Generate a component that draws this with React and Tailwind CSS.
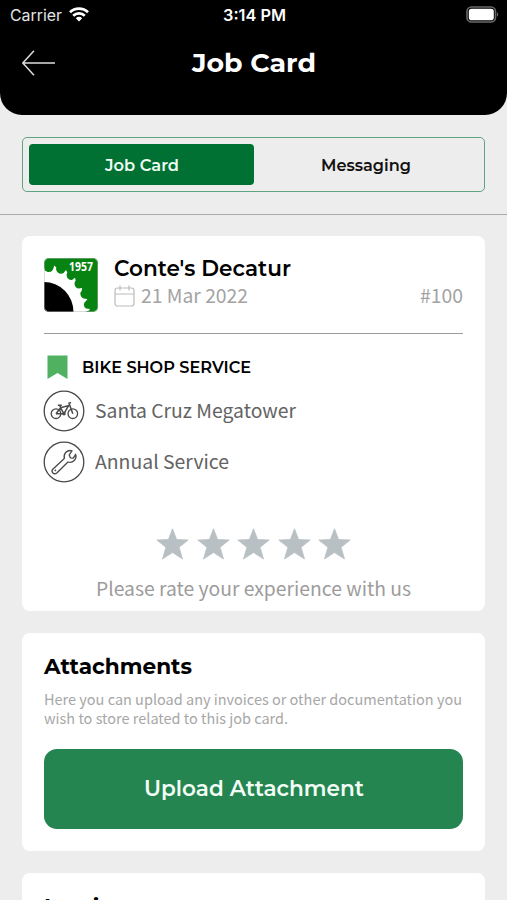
const mont = "font-['Montserrat','Inter',sans-serif]";
const src = "font-['Noto_Sans_CJK_SC',sans-serif]";

// Single line of text sized to an exact advance width.
function Line({ children, w, className }) {
  return (
    <svg width={w} height="32" className={"block shrink-0 overflow-visible " + className}>
      <text x="0" y="24" textLength={w} lengthAdjust="spacingAndGlyphs" fill="currentColor">
        {children}
      </text>
    </svg>
  );
}

function Star() {
  return (
    <svg width="33" height="32" viewBox="0 0 33 32" fill="#b9c0c4" stroke="#b9c0c4" strokeWidth=".8" strokeLinejoin="round">
      <path d="M16.5 0.8 20.6 11.5 32.2 12 23.1 19.3 26.5 31 16.5 24.5 6.5 31 9.9 19.3 0.8 12 12.4 11.5Z" />
    </svg>
  );
}

function Logo() {
  return (
    <svg width="54" height="54" viewBox="0 0 54 54" className="shrink-0 rounded-[5px]">
      <rect width="54" height="54" fill="#078311" />
      <path d="M0 54V9.5A4.8 4.8 0 0 0 9 11.5L10.3 7.5 12.3 9.5A4.9 4.9 0 0 0 19.5 15L22 12 23.3 14.5A4.9 4.9 0 0 0 28 22L31 19.8 31.7 22.5A4.9 4.9 0 0 0 34.5 30.5L38 30 37.8 32.5A4.9 4.9 0 0 0 39.5 40.5L43.5 41 42 43A4.4 4.4 0 0 0 42 50.5L46 51 45 52.5 41 54Z" fill="#fff" />
      <path d="M0 24A29.5 30 0 0 1 29.5 54H0Z" fill="#000" />
      <text x="25" y="13" textLength="24" lengthAdjust="spacingAndGlyphs" fill="#fff" className="font-['Noto_Sans',sans-serif] text-[12.5px] font-bold">1957</text>
      <rect x=".3" y=".3" width="53.4" height="53.4" rx="5" fill="none" stroke="#b5b5b5" strokeWidth=".6" />
    </svg>
  );
}

export default function App() {
  return (
    <div className="h-[900px] w-[507px] overflow-hidden bg-[#ededed]">
      <header className="h-[115px] rounded-b-[22px] bg-black text-white">
        <div className="grid h-[30px] grid-cols-3 items-center pl-[10px] pr-[8px] font-['Inter',sans-serif] text-base">
          <div className="flex items-center gap-[7px]">
            <Line w={52} className="-mt-[4px] text-[16px] text-[#e4e4e4]">Carrier</Line>
            <svg width="20" height="15" viewBox="0 0 20 15" fill="none" stroke="#fff" strokeWidth="2.8" className="-mt-[2px]">
              <path d="M1 5.2C6 .5 14 .5 19 5.2M4.2 8.7C7.5 5.6 12.5 5.6 15.8 8.7" />
              <path d="M6.8 11.2Q10 8.5 13.2 11.2L10 14.5Z" fill="#fff" stroke="none" />
            </svg>
          </div>
          <div className="flex justify-center">
            <Line w={63} className="-mt-[4px] text-[16px] font-semibold">3:14 PM</Line>
          </div>
          <svg width="33" height="17" viewBox="0 0 33 17" className="-mt-[2px] justify-self-end">
            <rect x="1" y="1" width="28.5" height="15" rx="4.5" fill="none" stroke="#686868" strokeWidth="1.6" />
            <rect x="2.8" y="2.8" width="25" height="11.4" rx="2.8" fill="#fff" />
            <path d="M31 6.3Q33 8.5 31 10.7Z" fill="#888" />
          </svg>
        </div>
        <div className="grid grid-cols-[125px_1fr_125px] items-center px-[22px] pt-[17.5px]">
          <svg width="34" height="26" viewBox="0 0 34 26" fill="none" stroke="#ddd" strokeWidth="1.5" className="-mt-[1px]">
            <path d="M12 .8.8 13 12 25.2M.8 13H33" />
          </svg>
          <div className="flex justify-center">
            <Line w={124} className={mont + " text-[25px] font-bold"}>Job Card</Line>
          </div>
        </div>
      </header>

      <div className="border-b border-[#aaa] px-[22px] py-[22px]">
        <div className="grid h-[55px] grid-cols-[225px_1fr] rounded-[5px] border-[1.5px] border-[#5fa381] p-[6px]">
          <div className="flex items-center justify-center rounded-[4px] bg-[#007133] text-[#effcf3]">
            <Line w={74} className={mont + " -mt-[4px] text-[16.5px] font-semibold"}>Job Card</Line>
          </div>
          <div className="flex items-center justify-center text-[#111]">
            <Line w={90} className={mont + " -mt-[4px] text-[16.5px] font-semibold"}>Messaging</Line>
          </div>
        </div>
      </div>

      <main className="flex flex-col gap-[22px] px-[22px] pt-[21px]">
        <section className="h-[375px] rounded-[8px] bg-white px-[22px] pt-[22px]">
          <div className="flex h-[76px] gap-[16px] border-b border-[#9b9b9b]">
            <Logo />
            <div className="flex-1">
              <Line w={177} className={mont + " -mt-[6px] text-[21.5px] font-semibold text-black"}>Conte's Decatur</Line>
              <div className="flex justify-between text-[#a3a3a3]">
                <div className="flex gap-[6px]">
                  <svg width="21" height="22" viewBox="0 0 21 22" fill="none" stroke="#bbb" strokeWidth="1.2" className="mt-px">
                    <rect x="1" y="3" width="19" height="18" rx="2.5" />
                    <path d="M1 9H20M6 .5V5.5M15 .5V5.5" />
                  </svg>
                  <Line w={107} className={src + " -mt-[5.5px] text-[19px]"}>21 Mar 2022</Line>
                </div>
                <Line w={43} className={src + " -mt-[5.5px] text-[19px]"}>#100</Line>
              </div>
            </div>
          </div>
          <div className="mt-[21px] flex h-[26px] gap-[14px] pl-[3px]">
            <svg width="21" height="24" viewBox="0 0 21 24"><path d="M.5.5H20.5V24L10.5 18 .5 24Z" fill="#50b160" /></svg>
            <Line w={169} className={mont + " -mt-[6px] text-[16.5px] font-semibold text-black"}>BIKE SHOP SERVICE</Line>
          </div>
          <div className="mt-[9px] flex h-[42px] gap-[10px] text-[#636363]">
            <svg width="42" height="42" viewBox="0 0 42 42" fill="none" stroke="#494949" strokeWidth="1.3" className="-ml-px">
              <circle cx="21" cy="21" r="19.8" />
              <circle cx="13" cy="23.7" r="4.8" /><circle cx="29.8" cy="23.7" r="4.8" />
              <path d="M13 23.7 17.5 17.8 21 23.7H13M17.5 17.8 25.5 15.6 21 23.7M14.8 15.2H18.8M16.7 15.2 17.8 18M29.8 23.7 26 13.2 28 12.5" strokeWidth="1.5" />
              <circle cx="21" cy="23.7" r="1.1" />
            </svg>
            <Line w={201} className={src + " mt-[3.5px] text-[19px]"}>Santa Cruz Megatower</Line>
          </div>
          <div className="mt-[9px] flex h-[42px] gap-[10px] text-[#636363]">
            <svg width="42" height="42" viewBox="0 0 42 42" fill="none" stroke="#494949" strokeWidth="1.3" strokeLinejoin="round" className="-ml-px">
              <circle cx="21" cy="21" r="19.8" />
              <path d="M9.8 28.2 21.3 17.5C20.3 12.5 24 8.5 29 9.8L26.2 13.8 27.3 16.8 30.3 17.2 32.7 13.3C34 18 30 22.5 25 21L13.8 32C11 34 7.5 31 9.8 28.2Z" />
              <path d="M11.8 30 13 28.8" />
            </svg>
            <Line w={134} className={src + " mt-[3.5px] text-[19px]"}>Annual Service</Line>
          </div>
          <div className="mt-[45px] flex justify-center gap-[7.5px]">
            <Star /><Star /><Star /><Star /><Star />
          </div>
          <div className="mt-[11.5px] flex justify-center text-[#9c9c9c]">
            <Line w={315} className={src + " text-[19px]"}>Please rate your experience with us</Line>
          </div>
        </section>

        <section className="h-[218px] rounded-[8px] bg-white px-[22px] pt-[17px]">
          <Line w={148} className={mont + " text-[22px] font-bold text-black"}>Attachments</Line>
          <div className="flex h-[67px] flex-col text-[#a7a7a7]">
            <Line w={418} className={src + " -mt-[1px] text-[14.5px]"}>Here you can upload any invoices or other documentation you</Line>
            <Line w={244} className={src + " -mt-[13px] text-[14.5px]"}>wish to store related to this job card.</Line>
          </div>
          <button className="flex h-[80px] w-full items-center justify-center rounded-[13px] bg-[#258550] text-[#f2fdf6]">
            <Line w={220} className={mont + " -mt-[2px] text-[21.5px] font-semibold"}>Upload Attachment</Line>
          </button>
        </section>

        <section className="h-[218px] rounded-[8px] bg-white px-[22px] pt-[17px]">
          <Line w={93} className={mont + " text-[22px] font-bold text-black"}>Invoices</Line>
        </section>
      </main>
    </div>
  );
}
